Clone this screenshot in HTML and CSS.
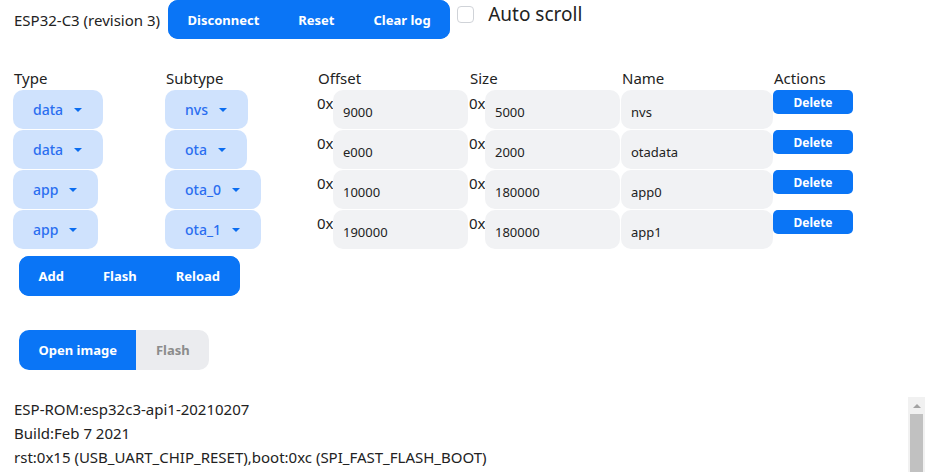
FILE: index.html
```html
<!DOCTYPE html>
<html>
<head>
<meta charset="utf-8">
<link rel="stylesheet" href="styles.css">
</head>
<body>
<div class="page">
  <div class="topbar">
    <span class="chip">ESP32-C3 (revision 3)</span>
    <div class="btn-group">
      <button class="btn">Disconnect</button>
      <button class="btn">Reset</button>
      <button class="btn">Clear log</button>
    </div>
    <label class="check">
      <span class="box"></span>
      <span class="check-text">Auto scroll</span>
    </label>
  </div>

  <div class="table">
    <div class="th">Type</div>
    <div class="th">Subtype</div>
    <div class="th">Offset</div>
    <div class="th">Size</div>
    <div class="th">Name</div>
    <div class="th">Actions</div>

    <div class="cell"><button class="select">data<span class="caret"></span></button></div>
    <div class="cell"><button class="select">nvs<span class="caret"></span></button></div>
    <div class="cell hex"><span class="prefix">0x</span><input class="field" value="9000"></div>
    <div class="cell hex"><span class="prefix">0x</span><input class="field" value="5000"></div>
    <div class="cell"><input class="field name" value="nvs"></div>
    <div class="cell"><button class="del">Delete</button></div>

    <div class="cell"><button class="select">data<span class="caret"></span></button></div>
    <div class="cell"><button class="select">ota<span class="caret"></span></button></div>
    <div class="cell hex"><span class="prefix">0x</span><input class="field" value="e000"></div>
    <div class="cell hex"><span class="prefix">0x</span><input class="field" value="2000"></div>
    <div class="cell"><input class="field name" value="otadata"></div>
    <div class="cell"><button class="del">Delete</button></div>

    <div class="cell"><button class="select">app<span class="caret"></span></button></div>
    <div class="cell"><button class="select">ota_0<span class="caret"></span></button></div>
    <div class="cell hex"><span class="prefix">0x</span><input class="field" value="10000"></div>
    <div class="cell hex"><span class="prefix">0x</span><input class="field" value="180000"></div>
    <div class="cell"><input class="field name" value="app0"></div>
    <div class="cell"><button class="del">Delete</button></div>

    <div class="cell"><button class="select">app<span class="caret"></span></button></div>
    <div class="cell"><button class="select">ota_1<span class="caret"></span></button></div>
    <div class="cell hex"><span class="prefix">0x</span><input class="field" value="190000"></div>
    <div class="cell hex"><span class="prefix">0x</span><input class="field" value="180000"></div>
    <div class="cell"><input class="field name" value="app1"></div>
    <div class="cell"><button class="del">Delete</button></div>
  </div>

  <div class="btn-group actions">
    <button class="btn">Add</button>
    <button class="btn">Flash</button>
    <button class="btn">Reload</button>
  </div>

  <div class="btn-group image">
    <button class="btn">Open image</button>
    <button class="btn disabled">Flash</button>
  </div>

  <div class="log">
    <div class="log-text">
      <div>ESP-ROM:esp32c3-api1-20210207</div>
      <div>Build:Feb 7 2021</div>
      <div>rst:0x15 (USB_UART_CHIP_RESET),boot:0xc (SPI_FAST_FLASH_BOOT)</div>
    </div>
    <div class="scrollbar" aria-hidden="true">
      <div class="sb-arrow"><span class="sb-tri"></span></div>
      <div class="sb-thumb"></div>
    </div>
  </div>
</div>
</body>
</html>
```
FILE: styles.css
```css
* {
  box-sizing: border-box;
}

body {
  margin: 0;
  font-family: "Noto Sans", "Open Sans", sans-serif;
  color: #212529;
  background: #fff;
}

.page {
  padding: 0 0 0 13px;
}

.topbar {
  display: flex;
  align-items: center;
  height: 39px;
}

.chip {
  font-size: 15px;
  margin-left: 1px;
  width: 154px;
  color: #222;
}

.btn-group {
  display: inline-flex;
  background: #0a75f6;
  border-radius: 10px;
  overflow: hidden;
}

.btn {
  font-family: inherit;
  font-size: 13px;
  font-weight: 700;
  color: #fff;
  background: #0a75f6;
  border: 0;
  height: 39px;
  padding: 0 19.5px;
  margin: 0;
}

.check {
  display: flex;
  align-self: flex-start;
  align-items: center;
  margin-left: 7px;
  margin-top: 2px;
  height: 24px;
}

.box {
  width: 17px;
  height: 17px;
  border: 1.5px solid #d0d3d8;
  border-radius: 4px;
  background: #fff;
}

.check-text {
  font-size: 19px;
  margin-left: 14px;
  color: #222;
}

.table {
  display: grid;
  grid-template-columns: repeat(5, 152px) 160px;
  grid-template-rows: 22px repeat(4, 40px);
  margin-top: 29px;
  width: max-content;
}

.th {
  font-size: 15px;
  line-height: 20px;
  padding-left: 1px;
  color: #222;
}

.cell {
  display: flex;
  align-items: flex-start;
  height: 40px;
}

.select {
  display: flex;
  align-items: center;
  height: 39px;
  padding: 0 21px 0 20px;
  border: 0;
  border-radius: 10px;
  background: #cfe2fd;
  color: #2a6ef0;
  font-family: inherit;
  font-size: 14px;
  font-weight: 500;
}

.caret {
  width: 0;
  height: 0;
  margin-left: 11px;
  border-left: 4px solid transparent;
  border-right: 4px solid transparent;
  border-top: 4px solid #0a6cf0;
}

.prefix {
  font-size: 15px;
  line-height: 20px;
  margin-top: 3px;
  width: 16px;
  color: #222;
}

.field {
  width: 135px;
  height: 39px;
  border: 0;
  border-radius: 10px;
  background: #f1f2f4;
  padding: 8px 10px 4px;
  font-family: inherit;
  font-size: 13px;
  color: #222;
  outline: none;
}

.field.name {
  width: 152px;
}

.del {
  width: 80px;
  height: 24px;
  border: 0;
  border-radius: 5px;
  background: #0a75f6;
  color: #fff;
  font-family: inherit;
  font-size: 12px;
  font-weight: 700;
}

.actions {
  margin: 6px 0 0 6px;
}

.actions .btn {
  height: 40px;
}

.image {
  display: flex;
  width: max-content;
  margin: 34px 0 0 6px;
  background: transparent;
}

.image .btn {
  height: 40px;
}

.image .btn.disabled {
  background: #ebecef;
  color: #8c8c8c;
}

.log {
  display: flex;
  margin-top: 27px;
  width: 912px;
  height: 75px;
  overflow: hidden;
}

.log-text {
  flex: 1;
  font-size: 15px;
  line-height: 24px;
  color: #222;
  padding-left: 1px;
}

.scrollbar {
  width: 17px;
  display: flex;
  flex-direction: column;
  background: #f1f1f1;
}

.sb-arrow {
  height: 17px;
  display: flex;
  align-items: center;
  justify-content: center;
}

.sb-tri {
  width: 0;
  height: 0;
  border-left: 4px solid transparent;
  border-right: 4px solid transparent;
  border-bottom: 4px solid #a3a3a3;
}

.sb-thumb {
  flex: 1;
  margin: 0 2px;
  background: #c1c1c1;
}
```
